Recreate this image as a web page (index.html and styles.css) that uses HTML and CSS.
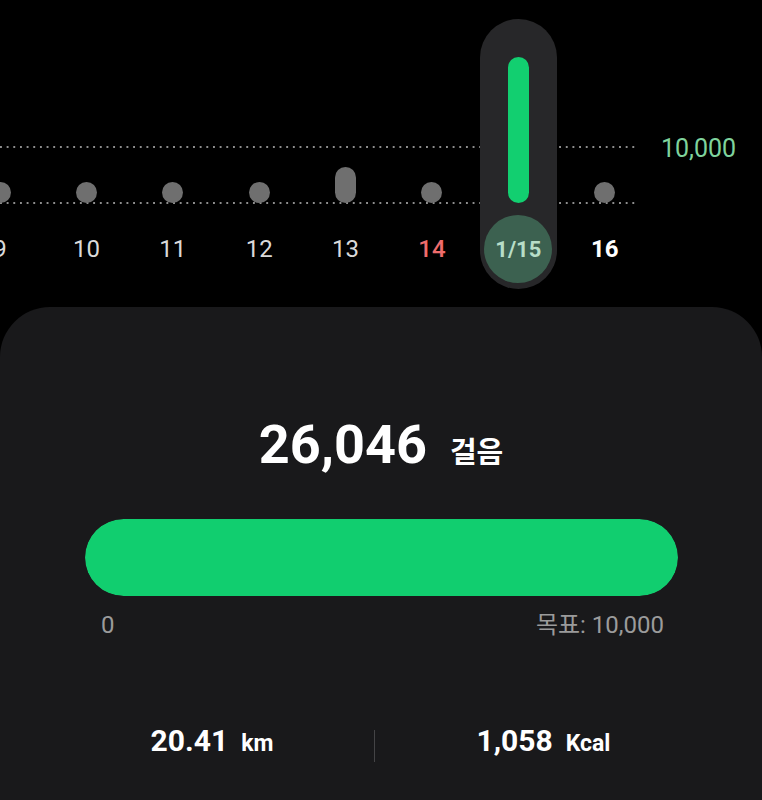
FILE: index.html
```html
<!DOCTYPE html>
<html lang="ko">
<head>
<meta charset="utf-8">
<title>걸음</title>
<link rel="stylesheet" href="styles.css">
</head>
<body>
<div class="screen">
  <section class="chart">
    <div class="plot">
      <div class="grid-line goal"></div>
      <div class="grid-line base"></div>
      <div class="cols">
        <div class="col"><div class="col-inner"><div class="bars"><div class="bar"></div></div><div class="lbl">9</div></div></div>
        <div class="col"><div class="col-inner"><div class="bars"><div class="bar"></div></div><div class="lbl">10</div></div></div>
        <div class="col"><div class="col-inner"><div class="bars"><div class="bar"></div></div><div class="lbl">11</div></div></div>
        <div class="col"><div class="col-inner"><div class="bars"><div class="bar"></div></div><div class="lbl">12</div></div></div>
        <div class="col"><div class="col-inner"><div class="bars"><div class="bar" style="height:36px"></div></div><div class="lbl">13</div></div></div>
        <div class="col"><div class="col-inner"><div class="bars"><div class="bar"></div></div><div class="lbl holiday">14</div></div></div>
        <div class="col"><div class="col-inner sel"><div class="bars"><div class="bar green" style="height:146px"></div></div><div class="lbl today">1/15</div></div></div>
        <div class="col"><div class="col-inner"><div class="bars"><div class="bar"></div></div><div class="lbl future">16</div></div></div>
      </div>
    </div>
    <div class="axis"><span class="goal-label">10,000</span></div>
  </section>

  <section class="card">
    <div class="total">
      <span class="total-num">26,046</span>
      <span class="total-unit">걸음</span>
    </div>
    <div class="progress"><div class="progress-fill" style="width:100%"></div></div>
    <div class="progress-labels">
      <span>0</span>
      <span class="goal-text">목표: 10,000</span>
    </div>
    <div class="stats">
      <div class="stat"><span class="stat-num">20.41</span><span class="stat-unit">km</span></div>
      <div class="divider"></div>
      <div class="stat"><span class="stat-num">1,058</span><span class="stat-unit">Kcal</span></div>
    </div>
  </section>
</div>
</body>
</html>
```

FILE: styles.css
```css
* { box-sizing: border-box; }
html, body {
  margin: 0;
  padding: 0;
  background: #000;
}
body {
  font-family: Roboto, "Noto Sans CJK KR", sans-serif;
  color: #fff;
}
.screen {
  width: 762px;
  height: 800px;
  overflow: hidden;
  background: #000;
}

/* ---------- chart ---------- */
.chart {
  height: 307px;
  display: grid;
  grid-template-columns: 637px 1fr;
}
.plot {
  position: relative;
}
.grid-line {
  position: absolute;
  left: 0;
  width: 637px;
  height: 2px;
  background-image: linear-gradient(to right, #8e8e8e 0 2px, transparent 2px);
  background-size: 6.67px 2px;
  background-repeat: repeat-x;
}
.grid-line.goal { top: 146px; }
.grid-line.base { top: 202px; }

.cols {
  position: relative;
  display: flex;
  margin-left: -43.2px;
  padding-top: 19px;
}
.col {
  width: 86.4px;
  flex: none;
  display: flex;
  justify-content: center;
}
.col-inner {
  width: 77px;
  height: 270px;
  display: flex;
  flex-direction: column;
  align-items: center;
  border-radius: 38.5px;
}
.col-inner.sel {
  background: #272729;
}
.bars {
  height: 184px;
  display: flex;
  align-items: flex-end;
}
.bar {
  width: 21px;
  height: 21px;
  border-radius: 10.5px;
  background: #6f6f6f;
}
.bar.green {
  background: #12cf70;
}
.lbl {
  margin-top: 12px;
  width: 68px;
  height: 68px;
  display: flex;
  align-items: center;
  justify-content: center;
  font-size: 24px;
  color: #dadada;
}
.lbl.holiday { color: #ef6c6c; font-weight: 500; }
.lbl.future { color: #fff; font-weight: 700; }
.lbl.today {
  border-radius: 50%;
  background: #3c6150;
  color: #b7ddc7;
  font-size: 22px;
  font-weight: 700;
}

.axis {
  padding-top: 135px;
  padding-left: 24px;
}
.goal-label {
  font-size: 25px;
  line-height: 28px;
  color: #7fd39d;
}

/* ---------- card ---------- */
.card {
  height: 493px;
  background: #19191b;
  border-radius: 50px 50px 0 0;
  padding-top: 106px;
}
.total {
  display: flex;
  justify-content: center;
  align-items: baseline;
  gap: 23px;
  line-height: 64px;
}
.total-num {
  font-size: 54px;
  font-weight: 700;
}
.total-unit {
  font-family: "Noto Sans CJK KR", sans-serif;
  font-size: 29px;
  font-weight: 700;
}
.progress {
  margin: 37px 84px 0 85px;
  height: 77px;
  border-radius: 38.5px;
  background: #2c2c2e;
  overflow: hidden;
}
.progress-fill {
  height: 100%;
  border-radius: 38.5px;
  background: #11ce6f;
}
.progress-labels {
  margin: 15px 98px 0 101px;
  display: flex;
  justify-content: space-between;
  font-size: 24px;
  line-height: 28px;
  color: #9b9b9b;
}
.goal-text {
  font-family: Roboto, "Noto Sans CJK KR", sans-serif;
}
.stats {
  margin-top: 84px;
  margin-left: 50px;
  display: grid;
  grid-template-columns: 324px 1px 337px;
  align-items: start;
}
.stat {
  display: flex;
  justify-content: center;
  align-items: baseline;
  gap: 13px;
  line-height: 36px;
}
.stat-num {
  font-size: 30px;
  font-weight: 700;
}
.stat-unit {
  font-size: 23px;
  font-weight: 700;
}
.divider {
  margin-top: 7px;
  height: 32px;
  background: #444446;
}
```
